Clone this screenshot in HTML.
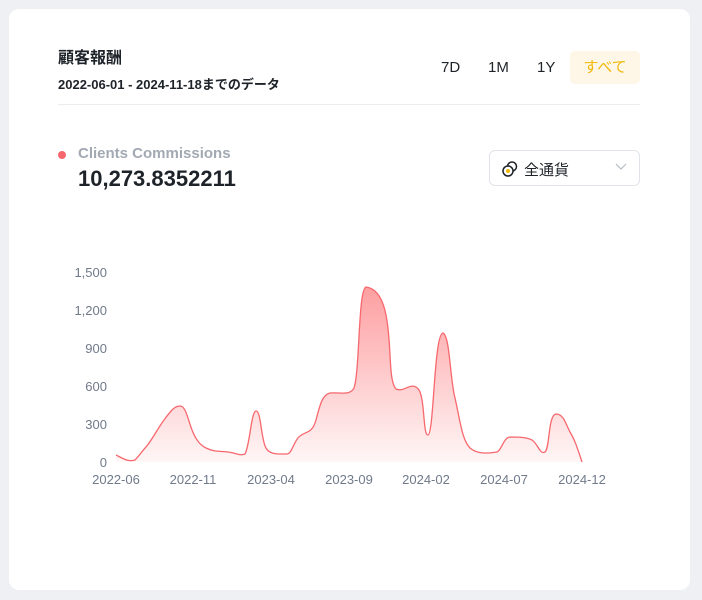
<!DOCTYPE html>
<html><head><meta charset="utf-8"><style>
body{margin:0;width:702px;height:600px;background:#eef0f3;font-family:"Liberation Sans","Noto Sans CJK JP",sans-serif;position:relative;overflow:hidden}
.card{position:absolute;left:9px;top:9px;width:681px;height:581px;background:#fff;border-radius:10px}
.a{position:absolute;white-space:nowrap}
</style></head><body>
<div class="card"></div>
<div class="a" style="left:58px;top:44px;font-size:16px;font-weight:bold;color:#1e2329">顧客報酬</div>
<div class="a" style="left:58px;top:74px;font-size:13px;font-weight:bold;color:#1e2329">2022-06-01 - 2024-11-18までのデータ</div>
<div class="a" style="left:441px;top:59px;font-size:15px;color:#1e2329">7D</div>
<div class="a" style="left:488px;top:59px;font-size:15px;color:#1e2329">1M</div>
<div class="a" style="left:537px;top:59px;font-size:15px;color:#1e2329">1Y</div>
<div class="a" style="left:570px;top:51px;width:70px;height:33px;background:#fef6e6;border-radius:5px;color:#f0b90b;font-size:15px;line-height:33px;text-align:center">すべて</div>
<div class="a" style="left:58px;top:104px;width:582px;height:1px;background:#eaecef"></div>
<div class="a" style="left:58px;top:151px;width:8px;height:8px;border-radius:50%;background:#f6686e"></div>
<div class="a" style="left:78px;top:145px;font-size:15px;font-weight:bold;color:#a3a9b3">Clients Commissions</div>
<div class="a" style="left:78px;top:166px;font-size:22px;font-weight:bold;color:#1e2329">10,273.8352211</div>
<div class="a" style="left:489px;top:150px;width:151px;height:36px;border:1px solid #e0e3e8;border-radius:6px;box-sizing:border-box"></div>
<svg class="a" style="left:501px;top:160px" width="18" height="18" viewBox="0 0 18 18"><circle cx="11" cy="6.5" r="4.5" fill="none" stroke="#1e2329" stroke-width="1.5"/><circle cx="7" cy="11" r="5" fill="#fff" stroke="#1e2329" stroke-width="1.5"/><circle cx="7" cy="11" r="2" fill="#f0b90b"/></svg>
<div class="a" style="left:524px;top:159px;font-size:15px;color:#1e2329">全通貨</div>
<svg class="a" style="left:615px;top:163px" width="12" height="8"><path d="M1 1l5 5 5-5" fill="none" stroke="#b7bdc6" stroke-width="1.2"/></svg>
<svg class="a" style="left:0;top:0" width="702" height="600">
<defs><linearGradient id="g" gradientUnits="userSpaceOnUse" x1="0" y1="285" x2="0" y2="462"><stop offset="0" stop-color="#fd9ea0"/><stop offset="1" stop-color="#fff6f6"/></linearGradient></defs>
<g font-size="13" fill="#707a8a" text-anchor="end">
<text x="107" y="277">1,500</text><text x="107" y="315">1,200</text><text x="107" y="353">900</text><text x="107" y="391">600</text><text x="107" y="429">300</text><text x="107" y="467">0</text></g>
<g font-size="13" fill="#707a8a" text-anchor="middle">
<text x="116" y="484">2022-06</text><text x="193" y="484">2022-11</text><text x="271" y="484">2023-04</text><text x="349" y="484">2023-09</text><text x="426" y="484">2024-02</text><text x="504" y="484">2024-07</text><text x="582" y="484">2024-12</text></g>
<path d="M116 455 C124 459 128 462 135 460 C140 455 143 450 146 447 C152 440 158 428 164 420 C170 412 174 406 180 406 C186 406 188 420 192 430 C196 440 200 445 206 448 C214 452 220 451 228 452 C236 453 240 456 245 454 C250 445 251 412 256 411 C261 410 261 440 266 448 C270 455 278 454 287 454 C292 454 294 440 300 436 C306 431 312 434 316 420 C320 405 322 395 330 393 C340 392 350 396 354 388 C360 370 358 290 366 287 C374 288 382 295 386 315 C392 345 388 380 396 389 C404 393 412 380 419 390 C425 400 423 436 428 435 C434 434 434 333 443 333 C450 336 450 380 455 398 C460 420 462 440 470 448 C478 455 490 453 497 452 C502 450 503 438 510 437 C518 437 526 437 532 440 C538 444 540 455 545 452 C550 448 548 415 556 414 C564 414 566 425 570 432 C575 440 578 450 582 462 L116 462 Z" fill="url(#g)"/>
<path d="M116 455 C124 459 128 462 135 460 C140 455 143 450 146 447 C152 440 158 428 164 420 C170 412 174 406 180 406 C186 406 188 420 192 430 C196 440 200 445 206 448 C214 452 220 451 228 452 C236 453 240 456 245 454 C250 445 251 412 256 411 C261 410 261 440 266 448 C270 455 278 454 287 454 C292 454 294 440 300 436 C306 431 312 434 316 420 C320 405 322 395 330 393 C340 392 350 396 354 388 C360 370 358 290 366 287 C374 288 382 295 386 315 C392 345 388 380 396 389 C404 393 412 380 419 390 C425 400 423 436 428 435 C434 434 434 333 443 333 C450 336 450 380 455 398 C460 420 462 440 470 448 C478 455 490 453 497 452 C502 450 503 438 510 437 C518 437 526 437 532 440 C538 444 540 455 545 452 C550 448 548 415 556 414 C564 414 566 425 570 432 C575 440 578 450 582 462" fill="none" stroke="#f6686e" stroke-width="1.3"/>
</svg>
</body></html>
